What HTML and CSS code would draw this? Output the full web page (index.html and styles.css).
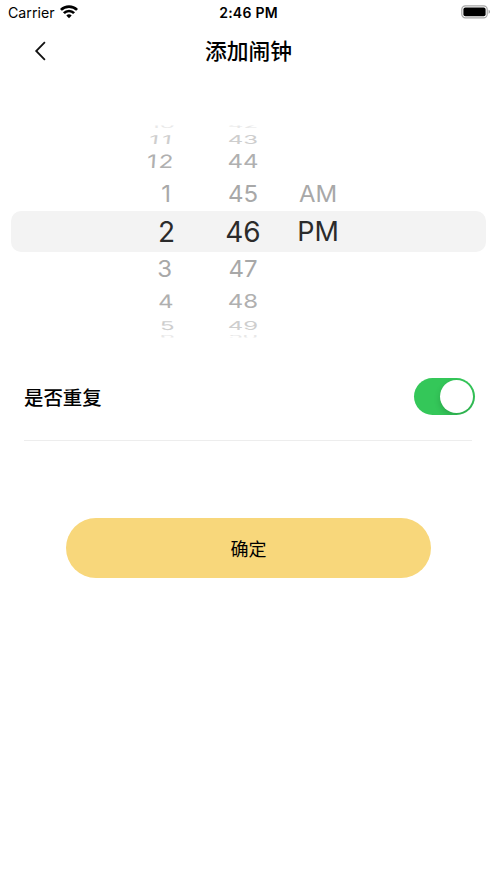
FILE: index.html
```html
<!DOCTYPE html>
<html lang="zh-CN">
<head>
<meta charset="utf-8">
<title>添加闹钟</title>
<link rel="stylesheet" href="styles.css">
</head>
<body>
<div class="status">
  <div class="carrier"><span>Carrier</span>
    <svg class="wifi" width="18" height="14" viewBox="0 0 18 14"><g fill="none" stroke="#000" stroke-width="2.7"><path d="M.9 4.9a11.5 11.5 0 0 1 16.2 0"/><path d="M3.9 8.1a7.2 7.2 0 0 1 10.2 0"/></g><path d="M9 13.3 6.3 10.6a3.8 3.8 0 0 1 5.4 0z"/></svg>
  </div>
  <div class="clock">2:46 PM</div>
  <svg class="battery" width="30" height="14" viewBox="0 0 30 14"><rect x=".8" y=".8" width="25.4" height="12" rx="3.6" fill="none" stroke="#a6a6a6" stroke-width="1.2"/><rect x="2.4" y="2.4" width="22.2" height="8.8" rx="2"/><path d="M27.6 4.8c1.8.7 1.8 3.3 0 4z" fill="#999"/></svg>
</div>
<header class="nav">
  <svg class="back" width="12" height="20" viewBox="0 0 12 20"><path d="M10.9 1.2 2.2 10l8.7 8.8" fill="none" stroke="#111" stroke-width="1.8"/></svg>
  <h1>添加闹钟</h1>
</header>
<main>
  <div class="picker">
    <div class="col hours">
      <div class="row edge up"><span>10</span></div>
      <div class="row far up"><span>11</span></div>
      <div class="row mid up"><span>12</span></div>
      <div class="row near up"><span>1</span></div>
      <div class="row current"><span>2</span></div>
      <div class="row near down"><span>3</span></div>
      <div class="row mid down"><span>4</span></div>
      <div class="row far down"><span>5</span></div>
      <div class="row edge down"><span>6</span></div>
    </div>
    <div class="col minutes">
      <div class="row edge up"><span>42</span></div>
      <div class="row far"><span>43</span></div>
      <div class="row mid"><span>44</span></div>
      <div class="row near"><span>45</span></div>
      <div class="row current"><span>46</span></div>
      <div class="row near"><span>47</span></div>
      <div class="row mid"><span>48</span></div>
      <div class="row far"><span>49</span></div>
      <div class="row edge down"><span>50</span></div>
    </div>
    <div class="col period">
      <div class="row near"><span>AM</span></div>
      <div class="row current"><span>PM</span></div>
    </div>
  </div>
  <div class="repeat">
    <span>是否重复</span>
    <div class="switch"><div class="knob"></div></div>
  </div>
  <button class="confirm">确定</button>
</main>
</body>
</html>
```
FILE: styles.css
```css
* { box-sizing: border-box; }
body {
  margin: 0;
  height: 883px;
  background: #fff;
  color: #000;
  font-family: Inter, "Noto Sans CJK SC", sans-serif;
  overflow: hidden;
}
.status {
  height: 26px;
  padding: 0 6px 2px 8px;
  display: grid;
  grid-template-columns: 1fr auto 1fr;
  align-items: center;
  font-size: 14.2px;
}
.carrier { display: flex; align-items: center; gap: 5px; }
.wifi { display: block; }
.clock { font-weight: 600; font-size: 14px; letter-spacing: .25px; margin-right: 2px; }
.battery { justify-self: end; display: block; }
.nav {
  height: 50px;
  padding: 0 34px;
  display: grid;
  grid-template-columns: 1fr auto 1fr;
  align-items: center;
}
.back { display: block; }
h1 { margin: 0; font-size: 21.8px; line-height: 32px; font-weight: 500; }
.picker {
  margin: 45px 11px 0;
  height: 221px;
  display: flex;
  position: relative;
}
.picker::before {
  content: "";
  position: absolute;
  left: 0;
  right: 0;
  top: 90px;
  height: 41px;
  border-radius: 10px;
  background: #f3f3f3;
}
.col { position: relative; display: flex; flex-direction: column; }
.hours { width: 164px; }
.minutes { width: 136px; }
.period { width: 92px; padding-top: 56px; margin-left: -39px; }
.row { display: flex; align-items: center; font-size: 24px; line-height: 26px; }
.row span { display: block; flex: none; }
.hours .row { justify-content: flex-end; }
.minutes .row, .period .row { justify-content: center; }
.current { height: 41px; font-size: 28px; color: #2b2b2b; }
.period .current { font-size: 27px; }
.near { height: 34px; color: #a8a8a8; }
.mid { height: 31px; color: #b0b0b0; }
.far { height: 15px; color: #cecece; }
.edge { height: 10px; color: #e8e8e8; }
.near span { transform: translateY(.5px) scaleY(.96); }
.mid span { transform: translateY(.2px) scaleY(.77); }
.far span { transform: translateY(.5px) scaleY(.5); }
.edge span { transform: scaleY(.3); }
.edge.up { clip-path: inset(4.5px -10px 3px -10px); }
.edge.down { clip-path: inset(3px -10px 4.5px -10px); }
.hours .near { padding-right: 3px; }
.hours .near.up { padding-right: 4px; }
.hours .mid { padding-right: 1px; }
.hours .mid.up { padding-right: 0; letter-spacing: 2px; }
.hours .far.up { padding-right: 0; letter-spacing: 3px; }
.hours .mid.up span { transform: translateY(.2px) skewX(-4deg) scaleY(.77); }
.hours .far.up span { transform: translateY(.5px) skewX(-8deg) scaleY(.5); }
.hours .mid.down span { transform: translateY(.2px) skewX(3deg) scaleY(.77); }
.hours .far.down span { transform: translateY(.5px) skewX(5deg) scaleY(.5); }
.repeat {
  margin: 12px 25px 0 24px;
  height: 87px;
  padding-bottom: 1px;
  border-bottom: 1px solid #ededed;
  display: flex;
  align-items: center;
  justify-content: space-between;
  font-size: 19.4px;
  font-weight: 500;
}
.switch {
  width: 61px;
  height: 37px;
  margin-right: -3px;
  padding: 2px;
  border-radius: 19px;
  background: #34c759;
  display: flex;
  justify-content: flex-end;
  overflow: hidden;
}
.knob {
  width: 33px;
  height: 33px;
  border-radius: 50%;
  background: #fff;
  box-shadow: 0 3px 6px rgba(0, 0, 0, .16);
}
.confirm {
  display: block;
  width: 365px;
  height: 60px;
  margin: 77.4px auto 0;
  padding: 0;
  border: 0;
  border-radius: 30px;
  background: #f8d77b;
  color: #000;
  font: 400 18px/60px "Noto Sans CJK SC", sans-serif;
}
```
